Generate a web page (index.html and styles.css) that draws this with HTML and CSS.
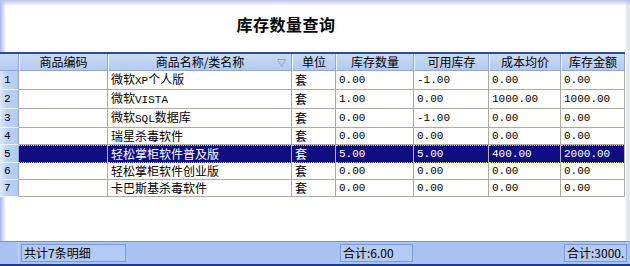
FILE: index.html
```html
<!DOCTYPE html>
<html>
<head>
<meta charset="utf-8">
<link rel="stylesheet" href="styles.css">
</head>
<body>
<div class="window">
  <div class="title-area"><h1 class="title">库存数量查询</h1></div>
  <table class="grid">
    <colgroup>
      <col class="c-no"><col class="c-code"><col class="c-name"><col class="c-unit">
      <col class="c-qty"><col class="c-avail"><col class="c-cost"><col class="c-amt">
    </colgroup>
    <thead>
      <tr>
        <th class="hno"></th>
        <th>商品编码</th>
        <th class="sorted">商品名称/类名称<svg class="sort" width="9" height="8" viewBox="0 0 9 8"><path d="M0.5 0.5 H8.5 L4.5 7.5 Z" fill="none" stroke="#8aa4cc" stroke-width="1"/></svg></th>
        <th>单位</th>
        <th>库存数量</th>
        <th>可用库存</th>
        <th>成本均价</th>
        <th>库存金额</th>
      </tr>
    </thead>
    <tbody>
      <tr><td class="no">1</td><td></td><td>微软<span class="lat">XP</span>个人版</td><td>套</td><td class="num">0.00</td><td class="num">-1.00</td><td class="num">0.00</td><td class="num">0.00</td></tr>
      <tr><td class="no">2</td><td></td><td>微软<span class="lat">VISTA</span></td><td>套</td><td class="num">1.00</td><td class="num">0.00</td><td class="num">1000.00</td><td class="num">1000.00</td></tr>
      <tr><td class="no">3</td><td></td><td>微软<span class="lat">SQL</span>数据库</td><td>套</td><td class="num">0.00</td><td class="num">-1.00</td><td class="num">0.00</td><td class="num">0.00</td></tr>
      <tr><td class="no">4</td><td></td><td>瑞星杀毒软件</td><td>套</td><td class="num">0.00</td><td class="num">0.00</td><td class="num">0.00</td><td class="num">0.00</td></tr>
      <tr class="sel"><td class="no">5</td><td></td><td>轻松掌柜软件普及版</td><td>套</td><td class="num">5.00</td><td class="num">5.00</td><td class="num">400.00</td><td class="num">2000.00</td></tr>
      <tr><td class="no">6</td><td></td><td>轻松掌柜软件创业版</td><td>套</td><td class="num">0.00</td><td class="num">0.00</td><td class="num">0.00</td><td class="num">0.00</td></tr>
      <tr><td class="no">7</td><td></td><td>卡巴斯基杀毒软件</td><td>套</td><td class="num">0.00</td><td class="num">0.00</td><td class="num">0.00</td><td class="num">0.00</td></tr>
    </tbody>
  </table>
  <div class="spacer"></div>
  <div class="status">
    <div class="s-first"></div>
    <div class="s-box s-count">共计7条明细</div>
    <div class="s-gap1"></div>
    <div class="s-box s-qty">合计:6.00</div>
    <div class="s-gap2"></div>
    <div class="s-box s-amt">合计:3000.</div>
  </div>
</div>
</body>
</html>
```
FILE: styles.css
```css
html, body {
  margin: 0;
  padding: 0;
}
body {
  width: 630px;
  height: 266px;
  overflow: hidden;
  font-family: "Noto Sans CJK SC", "Liberation Sans", sans-serif;
  font-size: 12px;
  color: #000;
}
.window {
  width: 630px;
  height: 266px;
  display: flex;
  flex-direction: column;
  background:
    linear-gradient(to bottom, #bcc4ef 0, rgba(255,255,255,0) 6px),
    linear-gradient(to right, #aab4ee 0, rgba(255,255,255,0) 6px),
    linear-gradient(to left, #e4e6f0 0, #e4e6f0 3px, rgba(255,255,255,0) 5px),
    #fff;
}
.title-area {
  height: 52px;
  box-sizing: border-box;
  padding: 13px 58px 0 0;
  text-align: center;
}
.title {
  margin: 0;
  font-size: 16px;
  font-weight: bold;
  line-height: 22px;
  letter-spacing: 0.5px;
}
.grid {
  border-collapse: separate;
  border-spacing: 0;
  table-layout: fixed;
  width: 625px;
  border-top: 2px solid #2c4ca4;
}
.c-no { width: 19px; }
.c-code { width: 89px; }
.c-name { width: 184px; }
.c-unit { width: 44px; }
.c-qty { width: 78px; }
.c-avail { width: 75px; }
.c-cost { width: 72px; }
.c-amt { width: 64px; }

.grid th {
  height: 17px;
  padding: 0;
  box-sizing: border-box;
  font-weight: normal;
  font-size: 12px;
  line-height: 16px;
  text-align: center;
  background: linear-gradient(to bottom, #c8daf7, #b3cbf1);
  border-left: 1px solid #eef4fd;
  border-right: 1px solid #8ea9d9;
  border-bottom: 1px solid #8ea9d9;
  white-space: nowrap;
}
.grid th.hno { border-left: none; }
.grid th.sorted { position: relative; }
.sort {
  position: absolute;
  right: 5px;
  top: 5px;
}
.grid td {
  height: 17px;
  box-sizing: border-box;
  padding: 0 0 0 3px;
  border-right: 1px solid #aeaaa0;
  border-bottom: 1px solid #aeaaa0;
  line-height: 16px;
  white-space: nowrap;
  overflow: hidden;
}
.grid td.no {
  padding: 0 0 0 4px;
  background: linear-gradient(to right, #dde8fa, #bcd1f3 40%, #b3caf1);
  border-right: 1px solid #8ea9d9;
  border-bottom: 1px solid #eef4fd;
  font-size: 11px;
  font-family: "Liberation Mono", "DejaVu Sans Mono", monospace;
}
.num, .lat {
  font-family: "Liberation Mono", "DejaVu Sans Mono", monospace;
  font-size: 11px;
}
.grid tr.sel td {
  background: #0e0e82;
  color: #fff;
  border-top: 1px dotted #d8d070;
  border-bottom: 1px dotted #d8d070;
  border-right: 1px solid #b8b4a4;
}
.grid tr.sel td.no {
  background: linear-gradient(to right, #e6eefc, #bcd1f3 40%, #b3caf1);
  color: #000;
  border-top: none;
  border-bottom: 1px solid #eef4fd;
  border-right: 1px solid #8ea9d9;
}
.spacer { flex: 1; }
.status {
  height: 25px;
  box-sizing: border-box;
  display: flex;
  align-items: center;
  background: #a8c3f1;
  border-top: 1px solid #7393d2;
  border-bottom: 2px solid #1d3a8e;
}
.s-first {
  width: 18px;
  align-self: stretch;
  border-right: 1px solid #c8d8f6;
}
.s-box {
  height: 18px;
  box-sizing: border-box;
  border: 1px solid #7c9bd6;
  background: #b2cbf4;
  line-height: 16px;
  padding-left: 2px;
  white-space: nowrap;
  overflow: hidden;
}
.s-count { width: 105px; margin-left: 2px; }
.s-gap1 { width: 214px; }
.s-qty { width: 73px; }
.s-gap2 { flex: 1; }
.s-amt { width: 63px; margin-right: 3px; }
```
